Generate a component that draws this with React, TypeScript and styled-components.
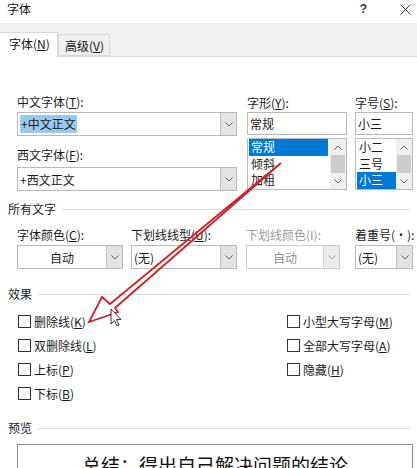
import * as React from 'react';
import styled, { createGlobalStyle } from 'styled-components';

const GlobalStyle = createGlobalStyle`
  html, body {
    margin: 0;
    padding: 0;
    background: #ffffff;
    overflow: hidden;
  }
  body {
    font-family: "Noto Sans CJK SC", "Liberation Sans", sans-serif;
    font-size: 12px;
    color: #1b1b1b;
  }
`;

const Chevron: React.FC<{ up?: boolean; color?: string }> = ({ up, color = '#606060' }) => (
  <svg width="8" height="5" viewBox="0 0 8 5">
    <path
      d={up ? 'M0.5 4.5 L4 1 L7.5 4.5' : 'M0.5 0.5 L4 4 L7.5 0.5'}
      fill="none"
      stroke={color}
      strokeWidth="1"
    />
  </svg>
);

const Select: React.FC<{ value: string; center?: boolean; disabled?: boolean; width: number }> = ({
  value,
  center,
  disabled,
  width,
}) => (
  <Styled.SelectBox $width={width} $disabled={disabled}>
    <Styled.SelectValue $center={center}>{value}</Styled.SelectValue>
    <Styled.DropButton $disabled={disabled}>
      <Chevron color={disabled ? '#9a9a9a' : '#606060'} />
    </Styled.DropButton>
  </Styled.SelectBox>
);

const ListBox: React.FC<{ items: string[]; selected: number; width: number; highlight: number }> = ({
  items,
  selected,
  width,
  highlight,
}) => (
  <Styled.List $width={width}>
    <Styled.ListItems>
      {items.map((it, i) => (
        <Styled.ListItem key={it} $selected={i === selected} $hl={highlight}>
          {it}
        </Styled.ListItem>
      ))}
    </Styled.ListItems>
    <Styled.ScrollBar>
      <Styled.ScrollArrow>
        <Chevron up />
      </Styled.ScrollArrow>
      <Styled.Thumb />
      <Styled.ScrollArrow>
        <Chevron />
      </Styled.ScrollArrow>
    </Styled.ScrollBar>
  </Styled.List>
);

const Check: React.FC<{ label: string; key_: string }> = ({ label, key_ }) => (
  <Styled.CheckRow>
    <Styled.Box />
    <span>
      {label}(<u>{key_}</u>)
    </span>
  </Styled.CheckRow>
);

const App: React.FC = () => {
  return (
    <Styled.Page>
      <GlobalStyle />
      <Styled.TitleBar>
        <span>字体</span>
        <Styled.TitleButtons>
          <Styled.Help>?</Styled.Help>
          <svg width="11" height="11" viewBox="0 0 11 11">
            <path d="M0.5 0.5 L10.5 10.5 M10.5 0.5 L0.5 10.5" stroke="#333" strokeWidth="1" />
          </svg>
        </Styled.TitleButtons>
      </Styled.TitleBar>

      <Styled.TabStrip>
        <Styled.Tab $active>
          字体(<u>N</u>)
        </Styled.Tab>
        <Styled.Tab>
          高级(<u>V</u>)
        </Styled.Tab>
      </Styled.TabStrip>

      <Styled.Body>
        <Styled.FontGrid>
          <Styled.Column>
            <Styled.Label>
              中文字体(<u>T</u>):
            </Styled.Label>
            <Styled.SelectBox $width={220}>
              <Styled.SelectValue>
                <Styled.Selected>+中文正文</Styled.Selected>
              </Styled.SelectValue>
              <Styled.DropButton>
                <Chevron />
              </Styled.DropButton>
            </Styled.SelectBox>
            <Styled.Label $top={12} $bottom={5}>
              西文字体(<u>F</u>):
            </Styled.Label>
            <Select value="+西文正文" width={220} />
          </Styled.Column>
          <Styled.Column>
            <Styled.Label $top={1} $bottom={2}>
              字形(<u>Y</u>):
            </Styled.Label>
            <Styled.TextBox $width={100}>常规</Styled.TextBox>
            <ListBox items={['常规', '倾斜', '加粗']} selected={0} width={100} highlight={80} />
          </Styled.Column>
          <Styled.Column>
            <Styled.Label $top={1} $bottom={2}>
              字号(<u>S</u>):
            </Styled.Label>
            <Styled.TextBox $width={58}>小三</Styled.TextBox>
            <ListBox items={['小二', '三号', '小三']} selected={2} width={58} highlight={40} />
          </Styled.Column>
        </Styled.FontGrid>

        <Styled.Section $top={11}>
          <span>所有文字</span>
          <Styled.Rule />
        </Styled.Section>

        <Styled.ColorRow>
          <Styled.Column>
            <Styled.Label>
              字体颜色(<u>C</u>):
            </Styled.Label>
            <Select value="自动" center width={106} />
          </Styled.Column>
          <Styled.Column>
            <Styled.Label>
              下划线线型(<u>U</u>):
            </Styled.Label>
            <Select value="(无)" width={106} />
          </Styled.Column>
          <Styled.Column>
            <Styled.Label $disabled>下划线颜色(I):</Styled.Label>
            <Select value="自动" center disabled width={94} />
          </Styled.Column>
          <Styled.Column>
            <Styled.Label>着重号(·):</Styled.Label>
            <Select value="(无)" width={58} />
          </Styled.Column>
        </Styled.ColorRow>

        <Styled.Section $top={18}>
          <span>效果</span>
          <Styled.Rule />
        </Styled.Section>

        <Styled.Effects>
          <Check label="删除线" key_="K" />
          <Check label="小型大写字母" key_="M" />
          <Check label="双删除线" key_="L" />
          <Check label="全部大写字母" key_="A" />
          <Check label="上标" key_="P" />
          <Check label="隐藏" key_="H" />
          <Check label="下标" key_="B" />
        </Styled.Effects>

        <Styled.Section $top={16}>
          <span>预览</span>
          <Styled.Rule />
        </Styled.Section>

        <Styled.Preview>总结：得出自己解决问题的结论</Styled.Preview>
      </Styled.Body>

      <Styled.Overlay width="417" height="468" viewBox="0 0 417 468">
        <polygon
          points="89,322 102,297 110,304 281,163 115,308 118,312"
          fill="none"
          stroke="#c9252b"
          strokeWidth="1.8"
          strokeLinejoin="miter"
        />
        <path
          d="M111 309 L111 324 L114.5 320.5 L117 326 L119 325 L116.5 319.5 L121 319.5 Z"
          fill="#ffffff"
          stroke="#222"
          strokeWidth="0.9"
        />
      </Styled.Overlay>
    </Styled.Page>
  );
};

const Styled = {
  Page: styled.div`
    position: relative;
    width: 417px;
    height: 468px;
    overflow: hidden;
    background: #ffffff;
  `,
  TitleBar: styled.div`
    height: 23px;
    display: flex;
    align-items: flex-start;
    justify-content: space-between;
    padding: 1px 6px 0 7px;
    box-sizing: border-box;
    line-height: 16px;
    color: #111;
  `,
  TitleButtons: styled.div`
    display: flex;
    align-items: center;
    gap: 33px;
    padding-top: 3px;
  `,
  Help: styled.span`
    font-family: "Liberation Sans", sans-serif;
    font-size: 12px;
    font-weight: bold;
    color: #333;
    line-height: 11px;
  `,
  TabStrip: styled.div`
    height: 34px;
    background: #f0f0f0;
    display: flex;
    align-items: flex-end;
    box-sizing: border-box;
    border-bottom: 1px solid #dcdcdc;
  `,
  Tab: styled.div<{ $active?: boolean }>`
    box-sizing: border-box;
    height: ${(p) => (p.$active ? 25 : 22)}px;
    width: ${(p) => (p.$active ? 58 : 52)}px;
    margin-bottom: ${(p) => (p.$active ? -1 : 0)}px;
    padding-left: ${(p) => (p.$active ? 9 : 6)}px;
    line-height: ${(p) => (p.$active ? 22 : 22)}px;
    background: ${(p) => (p.$active ? '#ffffff' : '#f0f0f0')};
    border: 1px solid #d9d9d9;
    border-left: ${(p) => (p.$active ? 'none' : '1px solid #d9d9d9')};
    border-bottom: ${(p) => (p.$active ? 'none' : '1px solid #d9d9d9')};
    color: #111;
  `,
  Body: styled.div`
    padding: 38px 4px 0 8px;
  `,
  FontGrid: styled.div`
    display: grid;
    grid-template-columns: 230px 108px 58px;
    padding-left: 9px;
    align-items: start;
  `,
  Column: styled.div`
    display: flex;
    flex-direction: column;
    align-items: flex-start;
  `,
  Label: styled.div<{ $top?: number; $bottom?: number; $disabled?: boolean }>`
    line-height: 14px;
    margin-top: ${(p) => p.$top ?? 0}px;
    margin-bottom: ${(p) => p.$bottom ?? 3}px;
    color: ${(p) => (p.$disabled ? '#9d9d9d' : '#1b1b1b')};
    white-space: nowrap;
  `,
  SelectBox: styled.div<{ $width: number; $disabled?: boolean }>`
    box-sizing: border-box;
    width: ${(p) => p.$width}px;
    height: 24px;
    display: flex;
    border: 1px solid ${(p) => (p.$disabled ? '#cccccc' : '#b9b9b9')};
    background: #ffffff;
    color: ${(p) => (p.$disabled ? '#8f8f8f' : '#1b1b1b')};
  `,
  SelectValue: styled.div<{ $center?: boolean }>`
    flex: 1;
    display: flex;
    align-items: center;
    justify-content: ${(p) => (p.$center ? 'center' : 'flex-start')};
    padding-left: ${(p) => (p.$center ? 0 : 2)}px;
    white-space: nowrap;
  `,
  Selected: styled.span`
    background: #99c9ef;
    padding: 1px 1px;
    line-height: 16px;
  `,
  DropButton: styled.div<{ $disabled?: boolean }>`
    width: 15px;
    display: flex;
    align-items: center;
    justify-content: center;
    background: ${(p) => (p.$disabled ? '#ececec' : '#e3e3e3')};
    border-left: 1px solid ${(p) => (p.$disabled ? '#d6d6d6' : '#c2c2c2')};
  `,
  TextBox: styled.div<{ $width: number }>`
    box-sizing: border-box;
    width: ${(p) => p.$width}px;
    height: 23px;
    border: 1px solid #b9b9b9;
    padding-left: 2px;
    line-height: 21px;
  `,
  List: styled.div<{ $width: number }>`
    box-sizing: border-box;
    margin-top: 3px;
    width: ${(p) => p.$width}px;
    height: 52px;
    border: 1px solid #b9b9b9;
    display: flex;
  `,
  ListItems: styled.div`
    flex: 1;
    display: flex;
    flex-direction: column;
    padding-left: 1px;
  `,
  ListItem: styled.div<{ $selected?: boolean; $hl: number }>`
    height: 16.6px;
    line-height: 16px;
    width: ${(p) => p.$hl - 1}px;
    padding-left: 2px;
    box-sizing: border-box;
    background: ${(p) => (p.$selected ? '#0078d7' : 'transparent')};
    color: ${(p) => (p.$selected ? '#ffffff' : '#1b1b1b')};
  `,
  ScrollBar: styled.div`
    width: 16px;
    display: flex;
    flex-direction: column;
    background: #f0f0f0;
  `,
  ScrollArrow: styled.div`
    height: 16px;
    display: flex;
    align-items: center;
    justify-content: center;
  `,
  Thumb: styled.div`
    flex: 1;
    margin: 0 1px;
    background: #cdcdcd;
  `,
  Section: styled.div<{ $top: number }>`
    margin-top: ${(p) => p.$top}px;
    display: flex;
    align-items: center;
    gap: 6px;
    line-height: 14px;
    color: #1b1b1b;
  `,
  Rule: styled.div`
    flex: 1;
    height: 1px;
    margin-right: 3px;
    background: #dedede;
  `,
  ColorRow: styled.div`
    margin-top: 12px;
    padding-left: 9px;
    display: grid;
    grid-template-columns: 114px 115px 109px 58px;
    align-items: start;
  `,
  Effects: styled.div`
    margin-top: 8px;
    padding-left: 10px;
    display: grid;
    grid-template-columns: 269px 1fr;
    grid-auto-rows: 24px;
  `,
  CheckRow: styled.div`
    display: flex;
    align-items: center;
    gap: 3px;
    white-space: nowrap;
  `,
  Box: styled.div`
    width: 13px;
    height: 13px;
    box-sizing: border-box;
    border: 1px solid #333;
    background: #ffffff;
  `,
  Preview: styled.div`
    margin: 9px 0 0 9px;
    height: 60px;
    box-sizing: border-box;
    border: 1px solid #8a8a8a;
    border-bottom: none;
    padding-top: 8px;
    text-align: center;
    font-size: 19px;
    line-height: 24px;
    letter-spacing: 0px;
    color: #111;
    white-space: nowrap;
  `,
  Overlay: styled.svg`
    position: absolute;
    left: 0;
    top: 0;
    pointer-events: none;
  `,
};

export default App;
